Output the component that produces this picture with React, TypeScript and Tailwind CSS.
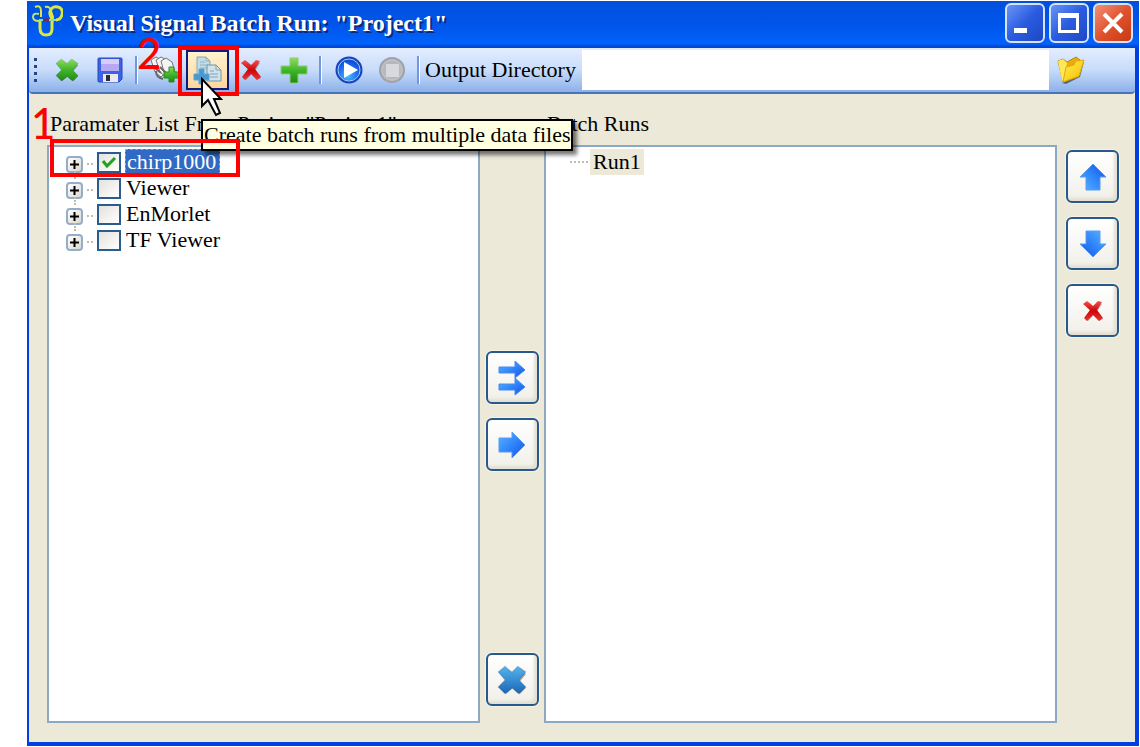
import { useState } from 'react';
import type { ReactNode } from 'react';

interface Parameter {
  name: string;
  checked: boolean;
}

const initialParameters: Parameter[] = [
  { name: 'chirp1000', checked: true },
  { name: 'Viewer', checked: false },
  { name: 'EnMorlet', checked: false },
  { name: 'TF Viewer', checked: false },
];

function Gradients() {
  return (
    <svg className="absolute h-0 w-0" aria-hidden="true">
      <defs>
        <linearGradient id="green" x1="0" y1="0" x2="0" y2="1">
          <stop offset="0" stopColor="#8fdd5c" />
          <stop offset="0.5" stopColor="#3fb52a" />
          <stop offset="1" stopColor="#1f8a12" />
        </linearGradient>
        <linearGradient id="red" x1="0" y1="0" x2="0" y2="1">
          <stop offset="0" stopColor="#f4524e" />
          <stop offset="0.5" stopColor="#c90808" />
          <stop offset="1" stopColor="#e33" />
        </linearGradient>
        <linearGradient id="blue" x1="0" y1="0" x2="1" y2="1">
          <stop offset="0" stopColor="#5db4ff" />
          <stop offset="0.5" stopColor="#2f86fb" />
          <stop offset="1" stopColor="#1a4fe0" />
        </linearGradient>
        <linearGradient id="steel" x1="0" y1="0" x2="0" y2="1">
          <stop offset="0" stopColor="#55b4ee" />
          <stop offset="1" stopColor="#1b66b8" />
        </linearGradient>
        <linearGradient id="gold" x1="0" y1="0" x2="1" y2="1">
          <stop offset="0" stopColor="#ffef50" />
          <stop offset="1" stopColor="#f5bd00" />
        </linearGradient>
        <radialGradient id="orb" cx="0.45" cy="0.75" r="0.75">
          <stop offset="0" stopColor="#3fc0ff" />
          <stop offset="0.55" stopColor="#1d6df0" />
          <stop offset="1" stopColor="#0b3fc4" />
        </radialGradient>
      </defs>
    </svg>
  );
}

function LogoIcon() {
  return (
    <svg viewBox="0 0 32 32" className="mt-1 h-8 w-8 self-start" fill="none" stroke="#d9e83c" strokeWidth="2">
      <path d="M4 2c4-2 6 0 6 4v6" />
      <path d="M8 9c-4-1-6 0-6 3s3 4 6 4" stroke="#b9e07a" />
      <path d="M9 15v8c0 5 2 7 6 7 4 0 6-2 6-6v-9c0-3-3-5-2-8 1-5 5-6 8-5 4 1 5 4 4 8-1 3-3 5-6 5" strokeWidth="3" />
      <path d="M14 2c3-1 6 1 6 4l2 6c0 3-1 5-1 7" />
      <path d="M8 15h5M18 15h7" stroke="#8fd8b0" />
      <path d="M12 15h6" stroke="#7a2a50" strokeWidth="3" />
    </svg>
  );
}

function CrossIcon({ fill, className }: { fill: string; className: string }) {
  return (
    <svg viewBox="0 0 26 26" className={className}>
      <path d="M3 7 8 2q5 5 7 5.500L20 2l4 5-5 6 5 6-5 5q-4-1-6-5l-6 5-5-5 6-6z" fill="#0005" transform="translate(1 1)" />
      <path d="M1 6 7 1q4 4 6 5l5-5 7 5-6 7 6 6-6 6-6-5-6 5-6-6 6-6z" fill={fill} stroke="#0002" />
    </svg>
  );
}

function RedXIcon() {
  return (
    <svg viewBox="0 0 22 22" className="h-[22px] w-[22px]">
      <path d="M3 5 6 2q4 3 5 5l5-5 3 1-5 8 6 7-4 2-5-6-6 6-2-2 5-7z" fill="#0004" transform="translate(1 1)" />
      <path d="M1 4 5 1q4 3 6 5l5-5 4 1-5 8 6 8-4 3-6-6-6 6-3-3 6-8z" fill="url(#red)" />
    </svg>
  );
}

function PlusIcon() {
  return (
    <svg viewBox="0 0 28 28" className="h-7 w-7">
      <path d="M10 2h8v8h9v8h-9v9h-8v-9H1v-8h9z" fill="url(#green)" stroke="#8acb70" />
    </svg>
  );
}

function SaveIcon() {
  return (
    <svg viewBox="0 0 26 26" className="h-[26px] w-[26px]">
      <path d="M1 2q0-1 1-1h22q1 0 1 1v20l-3 3H2q-1 0-1-1z" fill="#3c63e6" stroke="#2746b8" />
      <path d="M4 2h18v12H4z" fill="#b9a9f4" />
      <path d="M4 2h18v5H4z" fill="#d7cdfb" />
      <path d="M6 17h15v8H6z" fill="#e9e9ee" />
      <path d="M9 18h4v6H9z" fill="#2c2c34" />
    </svg>
  );
}

function BatchAddIcon() {
  return (
    <svg viewBox="0 0 30 30" className="h-[30px] w-[30px]">
      <g fill="#f4f4f4" stroke="#777">
        <path d="m1 5 5-3 6 3 4 12-5 5-6-5z" />
        <path d="m6 5 5-3 6 3 4 12-5 5-6-5z" />
        <path d="m11 6 5-3 6 4 3 10-5 5-6-5z" />
      </g>
      <path d="M6 16c0 4 2 7 7 8M5 13l6 5M10 12l6 6" fill="none" stroke="#666" strokeWidth="2" />
      <path d="M19 12h5v5h5v6h-5v4h-5v-4h-5v-6h5z" fill="url(#green)" stroke="#2b8d1c" />
    </svg>
  );
}

function BatchFilesIcon() {
  return (
    <svg viewBox="0 0 30 30" className="h-[30px] w-[30px]">
      <path d="M4 2h9l4 4v14H4z" fill="#c4dbe4" stroke="#7fa9be" />
      <path d="M13 2v4h4M7 7h5M7 10h8M7 13h8" fill="none" stroke="#8eb2c4" />
      <path d="M14 10h9l5 5v11H14z" fill="#d1e2e8" stroke="#7095ab" />
      <path d="M23 10v5h5M17 16h4M17 19h8M17 22h8" fill="none" stroke="#7ea3b8" />
      <path d="M6 14h5v5h5v6h-5v4H6v-4H1v-6h5z" fill="#4a98d0" stroke="#5aa4d6" />
    </svg>
  );
}

function PlayIcon() {
  return (
    <svg viewBox="0 0 28 28" className="h-7 w-7">
      <circle cx="14" cy="14" r="12" fill="url(#orb)" stroke="#1546c0" strokeWidth="3" />
      <circle cx="14" cy="14" r="11" fill="none" stroke="#a6cdf8" />
      <path d="m9 6 14 8-14 8z" fill="#fff" />
    </svg>
  );
}

function StopIcon() {
  return (
    <svg viewBox="0 0 28 28" className="h-7 w-7">
      <circle cx="14" cy="14" r="12" fill="#b6b8bd" stroke="#9fa2a9" strokeWidth="2" />
      <circle cx="14" cy="14" r="10" fill="none" stroke="#c4c6cb" />
      <rect x="8" y="8" width="13" height="13" rx="1" fill="#d8d9de" />
    </svg>
  );
}

function FolderIcon() {
  return (
    <svg viewBox="0 0 30 30" className="h-[30px] w-[30px]">
      <path d="m6 28 4 1 14-7 4-15-2-1-5 14z" fill="#0007" />
      <path d="m2 6 5-2 4 3 9-5 4 3-2 17L7 27z" fill="#e8ac0c" stroke="#b98508" />
      <path d="m2 6 5-2 4 4-3 17-2 1z" fill="#ffe75a" />
      <path d="m10 12 8-2 2-4 8-1-5 16L7 27z" fill="url(#gold)" stroke="#e3a90a" />
    </svg>
  );
}

const arrowTurns = {
  right: '',
  up: '-rotate-90',
  down: 'rotate-90',
};

function ArrowIcon({ turn }: { turn: keyof typeof arrowTurns }) {
  return (
    <svg viewBox="0 0 28 28" className={`h-7 w-7 ${arrowTurns[turn]}`}>
      <path d="M1 7h13V1l13 13-13 13v-6H1z" fill="url(#blue)" stroke="#5a9cf2" />
    </svg>
  );
}

function DoubleArrowIcon() {
  return (
    <svg viewBox="0 0 28 36" className="h-9 w-7" fill="url(#blue)" stroke="#4a8af0">
      <path d="M1 7h16V1l10 9-10 8v-5H1z" />
      <path d="M1 24h16v-6l10 9-10 8v-5H1z" />
    </svg>
  );
}

function Pointer() {
  return (
    <svg viewBox="0 0 22 40" className="pointer-events-none absolute top-[27px] left-[15px] z-30 h-10 w-[22px]">
      <path d="M1 2v27l6-6 8 15 4-2-6-14h7z" fill="#fff" stroke="#000" strokeWidth="2" />
    </svg>
  );
}

function ToolButton({ label, children }: { label: string; children: ReactNode }) {
  return (
    <button type="button" aria-label={label} className="flex h-10 w-[43px] shrink-0 items-center justify-center">
      {children}
    </button>
  );
}

function Separator() {
  return <div className="mr-[5px] ml-1 h-7 w-[3px] shrink-0 border-r border-l-2 border-r-white border-l-[#7397dc]" />;
}

function SideButton({ label, children }: { label: string; children: ReactNode }) {
  return (
    <button
      type="button"
      aria-label={label}
      className="flex h-[53px] w-[53px] items-center justify-center rounded-md border-2 border-[#28598c] bg-gradient-to-b from-white to-[#f0efe9] shadow-[inset_-3px_-3px_3px_#e3dfd2,0_0_0_1px_#f7f3e4]"
    >
      {children}
    </button>
  );
}

const captionButton = 'flex h-10 w-10 items-center justify-center rounded-md border-2 border-[#d5e3fb] bg-gradient-to-br';

export default function App() {
  const [parameters, setParameters] = useState(initialParameters);
  const [directory, setDirectory] = useState('');

  const toggle = (name: string) => {
    setParameters((list) => list.map((p) => (p.name === name ? { ...p, checked: !p.checked } : p)));
  };

  return (
    <div className="flex min-h-screen bg-white pt-px pr-px pb-px pl-[27px] font-['Liberation_Serif',serif] text-[22px] leading-[26px] text-black">
      <Gradients />
      <div className="flex flex-1 flex-col bg-[#0040e0]">
        {/* Title bar */}
        <header className="flex h-[47px] items-center gap-1 bg-gradient-to-b from-[#0050dc] via-[#0055ea] to-[#0066ff] pr-[6px] pl-1 shadow-[inset_0_-3px_2px_#0048d4]">
          <LogoIcon />
          <h1 className="mb-1 flex-1 pl-[3px] text-2xl font-bold whitespace-nowrap text-white [text-shadow:2px_2px_0_#0a2a80]">
            Visual Signal Batch Run: "Project1"
          </h1>
          <div className="mb-[3px] flex gap-1">
            <button type="button" aria-label="Minimize" className={`${captionButton} from-[#6a94f5] via-[#2a5be0] to-[#1d48c4]`}>
              <svg viewBox="0 0 28 28" className="h-7 w-7">
                <path d="M3 19h13v5H3z" fill="#fff" />
              </svg>
            </button>
            <button type="button" aria-label="Maximize" className={`${captionButton} from-[#6a94f5] via-[#2a5be0] to-[#1d48c4]`}>
              <svg viewBox="0 0 28 28" className="h-7 w-7">
                <path d="M3 4h21v20H3zm3 5v12h15V9z" fill="#fff" fillRule="evenodd" />
              </svg>
            </button>
            <button type="button" aria-label="Close" className={`${captionButton} from-[#f09078] via-[#e0522c] to-[#c83a14]`}>
              <svg viewBox="0 0 28 28" className="h-7 w-7">
                <path d="m5 5 18 18M23 5 5 23" stroke="#fff" strokeWidth="4" />
              </svg>
            </button>
          </div>
        </header>

        <div className="mr-1 mb-1 ml-0.5 flex flex-1 flex-col bg-[#ece9d8]">
          {/* Toolbar */}
          <div className="flex h-[46px] items-center rounded-b border-b-2 border-[#4a74b8] bg-gradient-to-b from-[#e3edff] via-[#c8dcfa] to-[#8cb0ea]">
            <div className="mr-[5px] ml-[5px] flex w-[6px] flex-col gap-1">
              <span className="h-[3px] w-[3px] bg-[#27418c]" />
              <span className="h-[3px] w-[3px] bg-[#27418c]" />
              <span className="h-[3px] w-[3px] bg-[#27418c]" />
              <span className="h-[3px] w-[3px] bg-[#27418c]" />
            </div>
            <ToolButton label="Clear">
              <CrossIcon fill="url(#green)" className="h-6 w-6" />
            </ToolButton>
            <ToolButton label="Save">
              <SaveIcon />
            </ToolButton>
            <div className="relative">
              <Separator />
              <span className="pointer-events-none absolute -top-6 left-1.5 z-20 font-[Lato,sans-serif] text-[42px] leading-[42px] font-medium text-[#f00]">2</span>
            </div>
            <ToolButton label="Add batch run">
              <BatchAddIcon />
            </ToolButton>
            <div className="relative shrink-0">
              <button
                type="button"
                aria-describedby="batch-tip"
                aria-label="Batch runs from files"
                className="flex h-10 w-[43px] items-center justify-center border-2 border-[#101c7c] bg-gradient-to-b from-[#fff3d0] to-[#ffd59c]"
              >
                <BatchFilesIcon />
              </button>
              <div className="pointer-events-none absolute -top-1 -left-2 z-20 h-[50px] w-[61px] border-4 border-[#f00]" />
              <Pointer />
              <div
                id="batch-tip"
                role="tooltip"
                className="absolute top-[69px] left-[15px] z-10 border-2 border-black bg-[#ffffe1] py-px pl-px whitespace-nowrap shadow-[4px_4px_4px_#0008]"
              >
                Create batch runs from multiple data files
              </div>
            </div>
            <ToolButton label="Delete">
              <RedXIcon />
            </ToolButton>
            <ToolButton label="Add">
              <PlusIcon />
            </ToolButton>
            <Separator />
            <ToolButton label="Run">
              <PlayIcon />
            </ToolButton>
            <ToolButton label="Stop">
              <StopIcon />
            </ToolButton>
            <Separator />
            <label htmlFor="directory" className="mr-1.5 whitespace-nowrap">
              Output Directory
            </label>
            <input
              id="directory"
              type="text"
              value={directory}
              onChange={(e) => setDirectory(e.target.value)}
              className="h-10 min-w-0 flex-1 bg-white px-1 outline-none"
            />
            <ToolButton label="Browse">
              <FolderIcon />
            </ToolButton>
            <div className="w-[43px] shrink-0" />
          </div>

          <main className="flex flex-1 pr-4 pb-[19px] pl-[18px]">
            {/* Parameter tree */}
            <section className="flex w-[433px] flex-col">
              <div className="relative flex h-[51px] items-end pb-2 pl-[3px]">
                <h2 className="whitespace-nowrap">Paramater List From Project "Project1"</h2>
                <span className="pointer-events-none absolute top-2 -left-4 z-20 font-[Lato,sans-serif] text-[42px] leading-[42px] font-medium text-[#f00]">1</span>
              </div>
              <ul className="flex-1 border-2 border-[#8ba9c4] bg-white pt-0.5 pl-[17px]">
                {parameters.map((p, i) => (
                  <li key={p.name} className="relative flex h-[26px] items-center">
                    {i > 0 && <span className="absolute -top-1 left-2 h-2 border-l-2 border-dotted border-[#c0bdb0]" />}
                    <button
                      type="button"
                      aria-label={`Expand ${p.name}`}
                      className="mt-1 flex h-[17px] w-[17px] items-center justify-center rounded-sm border-2 border-[#93aecb] bg-gradient-to-br from-white to-[#dcd8cc]"
                    >
                      <svg viewBox="0 0 11 11" className="h-[11px] w-[11px]">
                        <path d="M1 5.500h9M5.500 1v9" stroke="#000" strokeWidth="2" />
                      </svg>
                    </button>
                    <span className="mx-1 mt-1 w-[6px] border-t-2 border-dotted border-[#c0bdb0]" />
                    <span className="relative flex">
                      <input
                        id={`param-${i}`}
                        type="checkbox"
                        checked={p.checked}
                        onChange={() => toggle(p.name)}
                        className="h-[21px] w-6 appearance-none border-2 border-[#2a5c8e] bg-gradient-to-br from-[#e4e2dc] to-white"
                      />
                      {p.checked && (
                        <svg viewBox="0 0 24 21" className="pointer-events-none absolute inset-0 h-[21px] w-6">
                          <path d="m6 9 4 5 8-8" fill="none" stroke="#21a121" strokeWidth="3" />
                        </svg>
                      )}
                    </span>
                    <label
                      htmlFor={`param-${i}`}
                      className={
                        i === 0
                          ? 'ml-1 border border-dashed border-[#c9a04e] bg-[#316ac5] pr-[3px] pl-px leading-6 text-white'
                          : 'ml-[5px]'
                      }
                    >
                      {p.name}
                    </label>
                    {i === 0 && <div className="pointer-events-none absolute -top-2.5 -left-4 z-20 h-[38px] w-[190px] border-4 border-[#f00]" />}
                  </li>
                ))}
              </ul>
            </section>

            {/* Transfer buttons */}
            <div className="flex w-16 shrink-0 flex-col items-center gap-[14px] pt-[257px] pb-[17px]">
              <SideButton label="Add all">
                <DoubleArrowIcon />
              </SideButton>
              <SideButton label="Add selected">
                <ArrowIcon turn="right" />
              </SideButton>
              <div className="mt-auto">
                <SideButton label="Remove all">
                  <CrossIcon fill="url(#steel)" className="h-[30px] w-[30px]" />
                </SideButton>
              </div>
            </div>

            {/* Batch runs */}
            <section className="flex flex-1 flex-col">
              <div className="flex h-[51px] items-end pb-2 pl-[3px]">
                <h2>Batch Runs</h2>
              </div>
              <ul className="flex-1 border-2 border-[#8ba9c4] bg-white pt-0.5 pl-6">
                <li className="flex h-[26px] items-center">
                  <span className="mr-0.5 w-[18px] border-t-2 border-dotted border-[#c0bdb0]" />
                  <span className="bg-[#ece9d8] px-[3px]">Run1</span>
                </li>
              </ul>
            </section>

            <div className="flex shrink-0 flex-col gap-[14px] pt-14 pl-[9px]">
              <SideButton label="Move up">
                <ArrowIcon turn="up" />
              </SideButton>
              <SideButton label="Move down">
                <ArrowIcon turn="down" />
              </SideButton>
              <SideButton label="Remove run">
                <RedXIcon />
              </SideButton>
            </div>
          </main>
        </div>
      </div>
    </div>
  );
}
